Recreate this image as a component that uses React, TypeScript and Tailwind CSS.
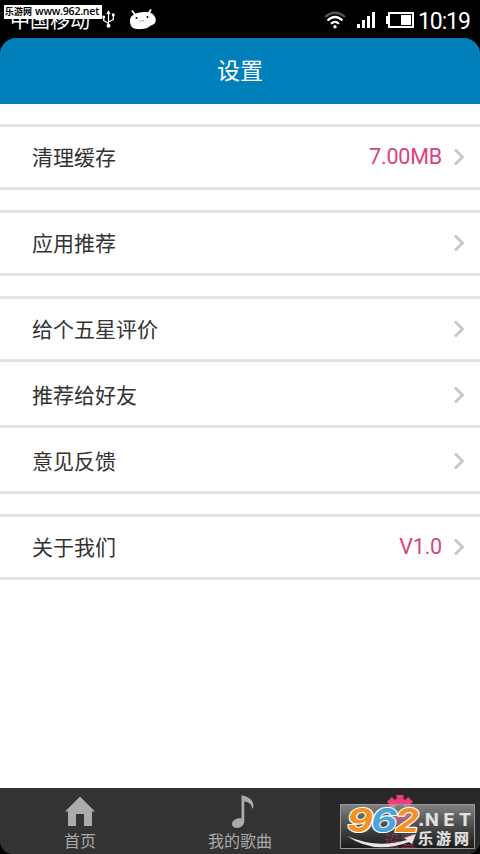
import React from 'react';

interface SettingItem {
  label: string;
  value?: string;
}

const groups: SettingItem[][] = [
  [{ label: '清理缓存', value: '7.00MB' }],
  [{ label: '应用推荐' }],
  [{ label: '给个五星评价' }, { label: '推荐给好友' }, { label: '意见反馈' }],
  [{ label: '关于我们', value: 'V1.0' }],
];

const StatusBar: React.FC = () => (
  <div className="relative flex h-[38px] shrink-0 items-center text-white">
    <span className="ml-[10px] w-[80px] whitespace-nowrap pt-px text-[20px] leading-[38px]">中国移动</span>

    {/* USB */}
    <svg className="ml-[12px] h-[18px] w-[13px]" viewBox="0 0 13 18" fill="none" stroke="#fff" strokeWidth="1.3">
      <path d="M6.500 15V3M6.500 13.500L1.700 10.500V7M6.500 12L11.300 9.500V5.500" />
      <path d="M4.300 4L6.500 0.300L8.700 4Z" fill="#fff" stroke="none" />
      <circle cx="1.700" cy="7" r="1.500" fill="#fff" stroke="none" />
      <path d="M10 3.500h2.600v2.600h-2.600z" fill="#fff" stroke="none" />
      <circle cx="6.500" cy="15.700" r="2" fill="#fff" stroke="none" />
    </svg>

    {/* Android head */}
    <svg className="ml-[14px] h-[21px] w-[28px]" viewBox="0 0 28 21">
      <path d="M3 1.500l3.500 5M22 .5l-3 5" stroke="#fff" strokeWidth="1.8" />
      <path d="M5 5.500C8 3 18 2 22 4C26 6 27.500 10 26.500 13C25.500 15.500 23 16 21 17C18 20.500 7 21 4 19C1 17 0.500 12 1.500 9C2 7.500 3.500 6.500 5 5.500Z" fill="#fff" />
      <circle cx="7.500" cy="9" r="1" fill="#000" />
      <circle cx="18.500" cy="8" r="1" fill="#000" />
      <path d="M10.500 11.500c.8 1 1.700 1 2.300 0c.8 1 1.700.5 2.200-.5" fill="none" stroke="#777" strokeWidth=".7" />
    </svg>

    <div className="ml-auto flex items-center pr-[9px] pt-px">
      {/* Wifi */}
      <svg className="mr-px h-[18px] w-[22px]" viewBox="0 0 22 18" fill="none" strokeWidth="2.200">
        <path d="M1 6Q11 -2.500 21 6" stroke="#555" />
        <path d="M3.500 9.500Q11 2.500 18.500 9.500" stroke="#fff" />
        <path d="M7 12.800Q11 9 15 12.800" stroke="#fff" />
        <circle cx="11" cy="15.700" r="1.700" fill="#fff" />
      </svg>

      {/* Signal */}
      <div className="ml-[10px] flex h-[16px] items-end gap-[2px]">
        <span className="h-[4px] w-[3px] bg-white" />
        <span className="h-[8px] w-[3px] bg-white" />
        <span className="h-[12px] w-[3px] bg-white" />
        <span className="h-[16px] w-[3px] bg-white" />
      </div>

      {/* Battery */}
      <div className="ml-[11px] flex items-center">
        <span className="h-[8px] w-[2px] bg-white" />
        <span className="flex h-[16px] w-[26px] justify-end border-2 border-white p-px">
          <span className="w-[10px] bg-white" />
        </span>
      </div>
      <span className="ml-[4px] w-[53px] pt-[4px] font-[Roboto,sans-serif] text-[23px] leading-[34px] tracking-[-1.1px]">10:19</span>
    </div>

    <div className="absolute left-[4px] top-[5px] flex h-[14px] w-[98px] items-center whitespace-nowrap bg-white pl-px text-black">
      <span className="text-[9px] font-bold">乐游网</span>
      <span className="ml-[3px] font-['Open_Sans',sans-serif] text-[10.500px] font-semibold tracking-[-0.2px]">www.962.net</span>
    </div>
  </div>
);

const SettingRow: React.FC<{ item: SettingItem }> = ({ item }) => (
  <div className="flex h-[66px] items-center border-b-[3px] border-[#e3e3e3] pl-[32px] pr-[15px] pt-[3px]">
    <span className="pb-px text-[21px] text-[#333]">{item.label}</span>
    <span className="ml-auto font-[Roboto,sans-serif] text-[21.500px] tracking-[-0.2px] text-[#d9437e]">{item.value}</span>
    <svg className="ml-[11px] h-[18px] w-[12px]" viewBox="0 0 12 18" fill="none" stroke="#c8c8c8" strokeWidth="2.8">
      <path d="M2 1.500L9.500 9L2 16.500" />
    </svg>
  </div>
);

const Watermark: React.FC = () => (
  <div className="absolute left-[20px] top-[16px] h-[45px] w-[135px] border border-[#999] bg-linear-to-b from-[#bbb]/60 to-[#111]/55">
    <svg className="h-full w-full overflow-visible" viewBox="1 1 133 43">
      <g transform="translate(0 28)" fontFamily="Inter, sans-serif" fontStyle="italic" fontWeight="700" fontSize="33" stroke="#fff" strokeWidth="2.2" paintOrder="stroke" strokeLinejoin="round">
        <text x="7" y="0" textLength="26" lengthAdjust="spacingAndGlyphs" fill="#f5911e">9</text>
        <text x="31" y="0" textLength="26" lengthAdjust="spacingAndGlyphs" fill="#49a5dc">6</text>
        <text x="55" y="0" textLength="24" lengthAdjust="spacingAndGlyphs" fill="#f5911e">2</text>
      </g>
      <path d="M7 32Q36 45 67 36L64 34L76 30L72 40L69 38Q34 51 7 32Z" fill="#e5e5e5" />
      <g fill="#e2e2e2" stroke="#e2e2e2">
        <text x="78" y="22" fontFamily="Inter, sans-serif" fontWeight="800" fontSize="18" strokeWidth=".2">.</text>
        <text x="85" y="22" fontFamily="Inter, sans-serif" fontWeight="700" fontSize="18" textLength="46" strokeWidth=".2">NET</text>
        <text x="78" y="39.500" fontFamily="'Noto Sans CJK SC', sans-serif" fontWeight="700" fontSize="15" textLength="51" strokeWidth=".2">乐游网</text>
      </g>
    </svg>
  </div>
);

const TabBar: React.FC = () => (
  <div className="grid h-[66px] shrink-0 grid-cols-3 overflow-hidden rounded-b-[13px] bg-[#333] text-[16px] text-[#aaa]">
    <div className="flex flex-col items-center pt-[8px]">
      <svg className="h-[30px] w-[30px]" viewBox="0 0 30 30" fill="#aaa">
        <path d="M15 .5L30 15.500H27V30H19V18H11V30H3V15.500H0Z" />
      </svg>
      <span className="mt-[3px] leading-[22px]">首页</span>
    </div>
    <div className="flex flex-col items-center pt-[6px]">
      <svg className="ml-[6px] h-[34px] w-[24px]" viewBox="0 0 24 34" fill="#aaa">
        <path d="M10.500 1C13 2.500 22.500 3 22.500 12Q22.500 13.500 21.500 15C20 9 17 8 13.300 7.500V27C13.300 31 10 34 6 34C3 34 1 32.500 1 30C1 26.500 6 23.500 10.500 24.500Z" />
      </svg>
      <span className="mt-px leading-[22px]">我的歌曲</span>
    </div>
    <div className="relative flex flex-col items-center bg-[#292929] pt-[7px] text-[#e83a7c]">
      <svg className="h-[30px] w-[30px]" viewBox="0 0 30 30">
        <g fill="#f03b7f">
          <circle cx="15" cy="15" r="11.500" />
          <path d="M11.500 0h7v30h-7zM0 11.500h30v7H0z" />
          <path d="M11.500 0h7v30h-7zM0 11.500h30v7H0z" transform="rotate(45 15 15)" />
        </g>
        <circle cx="15" cy="15" r="6" fill="#292929" />
      </svg>
      <span className="mt-[4px] leading-[22px]">设置</span>
      <Watermark />
    </div>
  </div>
);

const App: React.FC = () => {
  return (
    <div className="flex h-[854px] w-[480px] flex-col bg-black font-['Noto_Sans_CJK_SC',sans-serif]">
      <StatusBar />
      <header className="flex h-[66px] shrink-0 items-center justify-center rounded-t-[16px] bg-[#0080bb] pb-[3px] text-[23px] text-white">
        设置
      </header>
      <main className="flex flex-1 flex-col gap-[20px] bg-white pt-[20px]">
        {groups.map((group, index) => (
          <section key={index}>
            <div className="h-[3px] bg-[#e3e3e3]" />
            <div className="-mt-[3px]">
              {group.map((item) => (
                <SettingRow key={item.label} item={item} />
              ))}
            </div>
          </section>
        ))}
      </main>
      <TabBar />
    </div>
  );
};

export default App;
